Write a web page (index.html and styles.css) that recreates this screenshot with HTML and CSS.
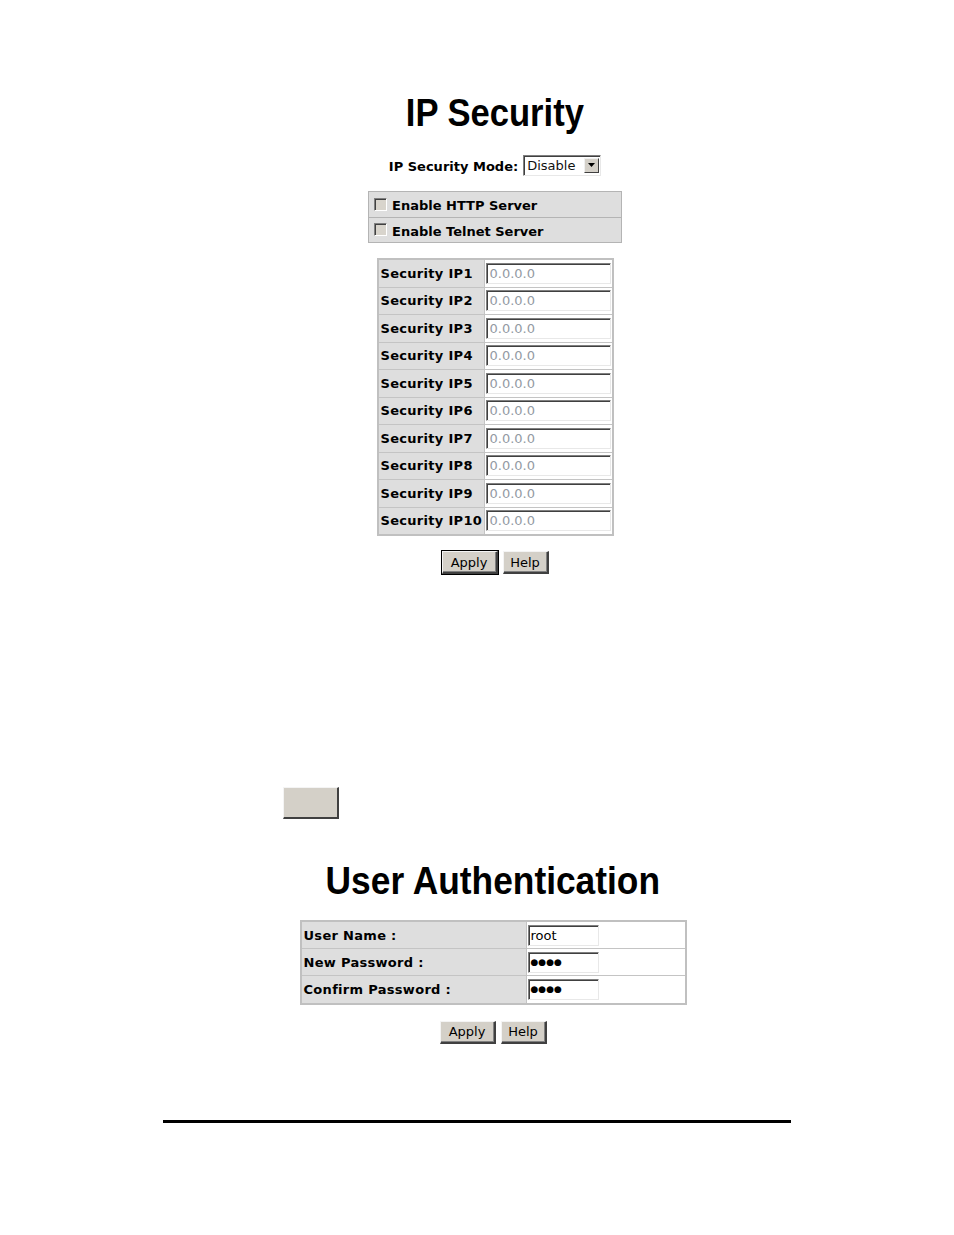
FILE: index.html
```html
<!DOCTYPE html>
<html>
<head>
<meta charset="utf-8">
<link rel="stylesheet" href="styles.css">
</head>
<body>
<div class="page">
  <section class="ipsec">
    <h1 class="title">IP Security</h1>
    <div class="mode-row">
      <span class="mode-label">IP Security Mode:</span>
      <span class="select"><span class="select-text">Disable</span><span class="select-btn"><svg width="7" height="4" viewBox="0 0 7 4"><path d="M0 0H7L3.5 4Z" fill="#000"/></svg></span></span>
    </div>
    <div class="check-panel">
      <div class="check-row"><span class="cb"></span><span class="cb-label">Enable HTTP Server</span></div>
      <div class="check-row"><span class="cb"></span><span class="cb-label">Enable Telnet Server</span></div>
    </div>
    <table class="ip-table">
      <tr><td class="lbl">Security IP1</td><td class="val"><span class="field ph">0.0.0.0</span></td></tr>
      <tr><td class="lbl">Security IP2</td><td class="val"><span class="field ph">0.0.0.0</span></td></tr>
      <tr><td class="lbl">Security IP3</td><td class="val"><span class="field ph">0.0.0.0</span></td></tr>
      <tr><td class="lbl">Security IP4</td><td class="val"><span class="field ph">0.0.0.0</span></td></tr>
      <tr><td class="lbl">Security IP5</td><td class="val"><span class="field ph">0.0.0.0</span></td></tr>
      <tr><td class="lbl">Security IP6</td><td class="val"><span class="field ph">0.0.0.0</span></td></tr>
      <tr><td class="lbl">Security IP7</td><td class="val"><span class="field ph">0.0.0.0</span></td></tr>
      <tr><td class="lbl">Security IP8</td><td class="val"><span class="field ph">0.0.0.0</span></td></tr>
      <tr><td class="lbl">Security IP9</td><td class="val"><span class="field ph">0.0.0.0</span></td></tr>
      <tr><td class="lbl">Security IP10</td><td class="val"><span class="field ph">0.0.0.0</span></td></tr>
    </table>
    <div class="buttons">
      <span class="btn btn-apply btn-default">Apply</span>
      <span class="btn btn-help">Help</span>
    </div>
  </section>

  <div class="blank-row"><span class="blank-btn"></span></div>

  <section class="auth">
    <h1 class="title">User Authentication</h1>
    <table class="auth-table">
      <tr><td class="lbl">User Name :</td><td class="val"><span class="field small">root</span></td></tr>
      <tr><td class="lbl">New Password :</td><td class="val"><span class="field small dots">&#9679;&#9679;&#9679;&#9679;</span></td></tr>
      <tr><td class="lbl">Confirm Password :</td><td class="val"><span class="field small dots">&#9679;&#9679;&#9679;&#9679;</span></td></tr>
    </table>
    <div class="buttons buttons-auth">
      <span class="btn btn-apply">Apply</span>
      <span class="btn btn-help">Help</span>
    </div>
  </section>

  <div class="rule"></div>
</div>
</body>
</html>
```

FILE: styles.css
```css
html, body {
  margin: 0;
  padding: 0;
  background: #ffffff;
}

.page {
  width: 954px;
  font-family: "DejaVu Sans", Verdana, sans-serif;
  color: #000;
}

.title {
  margin: 0;
  font-family: "Liberation Sans", Arial, sans-serif;
  font-weight: bold;
  font-size: 38px;
  line-height: 44px;
  height: 44px;
  text-align: center;
  transform: scaleX(0.91);
}

.ipsec {
  box-sizing: border-box;
  padding-top: 91px;
  padding-left: 36px;
  display: flex;
  flex-direction: column;
  align-items: center;
}

.mode-row {
  margin-top: 19px;
  display: flex;
  align-items: center;
  height: 22px;
}

.mode-label {
  font-weight: bold;
  font-size: 13px;
  margin-right: 5px;
  padding-top: 2px;
}

.select {
  display: flex;
  align-items: center;
  height: 21px;
  width: 78px;
  box-sizing: border-box;
  border-top: 1px solid #808080;
  border-left: 1px solid #808080;
  border-bottom: 1px solid #e8e8e8;
  border-right: 1px solid #e8e8e8;
  box-shadow: inset 1px 1px 0 #404040;
  background: #fff;
}

.select-text {
  flex: 1;
  font-size: 13px;
  padding-left: 3px;
  color: #111;
}

.select-btn {
  width: 15px;
  height: 15px;
  margin-right: 1px;
  background: #d4d0c8;
  border-top: 1px solid #f0f0f0;
  border-left: 1px solid #f0f0f0;
  border-right: 1px solid #404040;
  border-bottom: 1px solid #404040;
  box-sizing: border-box;
  display: flex;
  align-items: center;
  justify-content: center;
}

.check-panel {
  margin-top: 15px;
  width: 254px;
  box-sizing: border-box;
  border: 1px solid #b4b4b4;
  background: #dedede;
}

.check-row {
  height: 25px;
  display: flex;
  align-items: center;
  padding-left: 5px;
  padding-top: 2px;
  box-sizing: border-box;
}

.check-row + .check-row {
  border-top: 1px solid #b4b4b4;
}

.cb {
  width: 13px;
  height: 13px;
  box-sizing: border-box;
  background: #d8d4cc;
  border-top: 1px solid #808080;
  border-left: 1px solid #808080;
  border-right: 1px solid #fff;
  border-bottom: 1px solid #fff;
  box-shadow: inset 1px 1px 0 #404040;
  margin-right: 5px;
  margin-top: -3px;
}

.cb-label {
  font-weight: bold;
  font-size: 13px;
}

table {
  border-collapse: collapse;
}

.ip-table {
  margin-top: 15px;
  border: 2px solid #c0c0c0;
}

.ip-table td {
  height: 26.5px;
  padding: 0;
  border: 1px solid #c4c4c4;
}

.lbl {
  background: #dedede;
  font-weight: bold;
  font-size: 13px;
  white-space: nowrap;
}

.ip-table .lbl {
  width: 102px;
  padding: 0 1px 0 2px;
  letter-spacing: 0.3px;
}

.ip-table .val {
  width: 126px;
  padding: 0 0 0 1px;
  background: #fff;
}

.field {
  display: flex;
  align-items: center;
  box-sizing: border-box;
  height: 21px;
  width: 125px;
  background: #fff;
  border-top: 1px solid #808080;
  border-left: 1px solid #808080;
  border-right: 1px solid #e8e8e8;
  border-bottom: 1px solid #e8e8e8;
  box-shadow: inset 1px 1px 0 #404040;
  font-size: 13px;
  padding-left: 3px;
  color: #000;
}

.ph {
  color: #939aa3;
}

.buttons {
  margin-top: 15px;
  display: flex;
  gap: 5px;
}

.btn {
  display: flex;
  align-items: center;
  justify-content: center;
  box-sizing: border-box;
  height: 23px;
  font-size: 13px;
  background: #d4d0c8;
  border-top: 1px solid #f4f4f4;
  border-left: 1px solid #f4f4f4;
  border-right: 2px solid #404040;
  border-bottom: 2px solid #404040;
  box-shadow: inset -1px -1px 0 #808080;
  color: #000;
}

.btn-apply {
  width: 56px;
}

.btn-help {
  width: 46px;
}

.btn-default {
  outline: 1px solid #000;
}

.blank-row {
  padding-top: 213px;
  padding-left: 283px;
}

.blank-btn {
  display: block;
  width: 56px;
  height: 32px;
  box-sizing: border-box;
  background: #d4d0c8;
  border-top: 1px solid #f4f4f4;
  border-left: 1px solid #f4f4f4;
  border-right: 2px solid #404040;
  border-bottom: 2px solid #404040;
}

.auth {
  box-sizing: border-box;
  padding-top: 40px;
  padding-left: 32px;
  display: flex;
  flex-direction: column;
  align-items: center;
}

.auth .title {
  transform: scaleX(0.93);
}

.auth-table {
  margin-top: 17px;
  width: 387px;
  border: 2px solid #c0c0c0;
}

.auth-table td {
  height: 26.2px;
  padding: 0;
  border: 1px solid #c4c4c4;
}

.auth-table .lbl {
  width: 221px;
  padding: 0 1px 0 2px;
  letter-spacing: 0.3px;
}

.auth-table .val {
  background: #fff;
  padding: 0 0 0 1px;
}

.field.small {
  width: 71px;
  padding-left: 2px;
}

.dots {
  font-size: 9px;
}

.buttons-auth {
  margin-top: 16px;
}

.rule {
  margin-top: 76px;
  margin-left: 163px;
  width: 628px;
  height: 3px;
  background: #000;
}
```
